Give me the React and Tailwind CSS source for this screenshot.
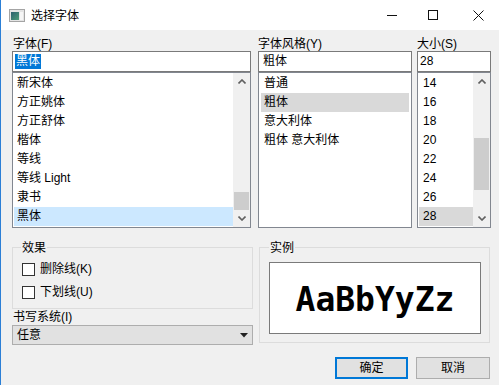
import React from 'react';

const fonts = ['新宋体', '方正姚体', '方正舒体', '楷体', '等线', '等线 Light', '隶书', '黑体'];
const styles = ['普通', '粗体', '意大利体', '粗体 意大利体'];
const sizes = ['14', '16', '18', '20', '22', '24', '26', '28'];

const Chevron = ({ up }) => (
  <svg width="8" height="5" viewBox="0 0 8 5">
    <path d={up ? 'M0.5 4.5 L4 1 L7.5 4.5' : 'M0.5 0.5 L4 4 L7.5 0.5'} fill="none" stroke="#606060" strokeWidth="1.6" />
  </svg>
);

const ScrollBar = ({ thumbTop, thumbHeight }) => (
  <div className="w-[17px] h-full bg-[#f0f0f0] flex flex-col shrink-0">
    <div className="h-[17px] flex items-center justify-center">
      <Chevron up />
    </div>
    <div className="flex-1 px-[1px]">
      <div className="bg-[#cdcdcd]" style={{ marginTop: thumbTop, height: thumbHeight }}></div>
    </div>
    <div className="h-[17px] flex items-center justify-center">
      <Chevron />
    </div>
  </div>
);

const Checkbox = ({ label }) => (
  <div className="flex items-center h-[13px] ml-[1px]">
    <div className="w-[13px] h-[13px] border border-[#333] bg-white"></div>
    <span className="ml-[5px] leading-[13px]">{label}</span>
  </div>
);

export default function App() {
  return (
    <div className="w-[499px] h-[385px] bg-[#f0f0f0] border-l border-[#2b7fd6] text-[12px] text-black font-['Liberation_Sans','Noto_Sans_CJK_SC',sans-serif] overflow-hidden">
      {/* Title bar */}
      <div className="h-[30px] bg-white flex items-center">
        <svg width="16" height="13" viewBox="0 0 16 13" className="ml-[8px]">
          <defs>
            <linearGradient id="g" x1="0" y1="0" x2="1" y2="1">
              <stop offset="0" stopColor="#2c5f6e" />
              <stop offset="1" stopColor="#4d9c78" />
            </linearGradient>
          </defs>
          <rect x="0.5" y="0.5" width="15" height="12" fill="#e4e4e4" stroke="#a4a4a4" />
          <rect x="2" y="3" width="8" height="8" fill="url(#g)" />
          <rect x="11" y="3" width="3" height="8" fill="#f6f6f6" />
        </svg>
        <span className="ml-[6px] font-['Noto_Sans_CJK_SC',sans-serif] leading-[14px]">选择字体</span>
        <div className="ml-auto flex items-center pr-[15px]">
          <svg width="10" height="10" viewBox="0 0 10 10">
            <path d="M0 5.5 H10" stroke="#111" strokeWidth="1" />
          </svg>
          <svg width="10" height="10" viewBox="0 0 10 10" className="ml-[31px]">
            <rect x="0.5" y="0.5" width="9" height="9" fill="none" stroke="#111" />
          </svg>
          <svg width="11" height="11" viewBox="0 0 11 11" className="ml-[35px]">
            <path d="M0.5 0.5 L10.5 10.5 M10.5 0.5 L0.5 10.5" stroke="#111" strokeWidth="1" />
          </svg>
        </div>
      </div>

      {/* Body */}
      <div className="pl-[11px] pr-[8px] pt-[8px]">
        {/* Top row: font / style / size */}
        <div className="flex">
          <div className="w-[239px] flex flex-col">
            <div className="leading-[13px] h-[13px] pl-[1px]">字体(F)</div>
            <div className="h-[21px] border border-[#7a7a7a] bg-white flex items-center pl-[2px]">
              <span className="bg-[#0078d7] text-white leading-[15px] px-[1px]">黑体</span>
            </div>
            <div className="h-[156px] border border-[#828790] bg-white flex">
              <div className="flex-1 pt-[1px] pl-[1px]">
                {fonts.map((f, i) => (
                  <div
                    key={f}
                    className={`h-[19px] leading-[19px] pl-[3px] ${i === fonts.length - 1 ? 'bg-[#cce8ff]' : ''}`}
                  >
                    {f}
                  </div>
                ))}
              </div>
              <ScrollBar thumbTop={102} thumbHeight={18} />
            </div>
          </div>

          <div className="w-[154px] ml-[7px] flex flex-col">
            <div className="leading-[13px] h-[13px]">字体风格(Y)</div>
            <div className="h-[21px] border border-[#7a7a7a] bg-white flex items-center pl-[4px] leading-[15px]">粗体</div>
            <div className="h-[156px] border border-[#828790] bg-white pt-[1px] px-[2px]">
              {styles.map((s, i) => (
                <div key={s} className={`h-[19px] leading-[19px] pl-[3px] ${i === 1 ? 'bg-[#d9d9d9]' : ''}`}>
                  {s}
                </div>
              ))}
            </div>
          </div>

          <div className="w-[74px] ml-[5px] flex flex-col">
            <div className="leading-[13px] h-[13px]">大小(S)</div>
            <div className="h-[21px] border border-[#7a7a7a] bg-white flex items-center pl-[2px] leading-[15px]">28</div>
            <div className="h-[156px] border border-[#828790] bg-white flex">
              <div className="flex-1 pt-[1px] pl-[1px]">
                {sizes.map((s, i) => (
                  <div
                    key={s}
                    className={`h-[19px] leading-[19px] pl-[4px] ${i === sizes.length - 1 ? 'bg-[#d9d9d9]' : ''}`}
                  >
                    {s}
                  </div>
                ))}
              </div>
              <ScrollBar thumbTop={48} thumbHeight={52} />
            </div>
          </div>
        </div>

        {/* Bottom row: effects / writing system / sample */}
        <div className="flex mt-[12px]">
          <div className="w-[241px] flex flex-col">
            <fieldset className="h-[69px] border border-[#dcdcdc] pl-[8px] pt-[9px] flex flex-col gap-[10px]">
              <legend className="px-[1px] leading-[14px] font-['Noto_Sans_CJK_SC',sans-serif]">效果</legend>
              <Checkbox label="删除线(K)" />
              <Checkbox label="下划线(U)" />
            </fieldset>
            <div className="leading-[14px] h-[14px] mt-[1px] pl-[1px]">书写系统(I)</div>
            <div className="h-[20px] mt-[1px] border border-[#adadad] bg-[#e1e1e1] flex items-center pl-[4px] pr-[4px]">
              <span className="leading-[15px]">任意</span>
              <svg width="8" height="5" viewBox="0 0 8 5" className="ml-auto">
                <path d="M0 0 H8 L4 4.5 Z" fill="#222" />
              </svg>
            </div>
          </div>

          <fieldset className="w-[231px] ml-[6px] h-[103px] border border-[#dcdcdc] pl-[9px] pr-[8px] pt-[8px]">
            <legend className="px-[1px] leading-[14px] font-['Noto_Sans_CJK_SC',sans-serif]">实例</legend>
            <div className="h-[72px] border border-[#7a7a7a] bg-white flex items-center justify-center">
              <span className="font-['DejaVu_Sans_Mono',monospace] font-bold text-[33px] leading-[33px] mt-[2px]">AaBbYyZz</span>
            </div>
          </fieldset>
        </div>

        {/* Buttons */}
        <div className="flex justify-end mt-[12px] mr-[1px] gap-[8px]">
          <button className="w-[73px] h-[22px] border-2 border-[#0078d7] bg-[#e1e1e1] leading-[16px]">确定</button>
          <button className="w-[74px] h-[22px] border border-[#adadad] bg-[#e1e1e1] leading-[18px]">取消</button>
        </div>
      </div>
    </div>
  );
}
